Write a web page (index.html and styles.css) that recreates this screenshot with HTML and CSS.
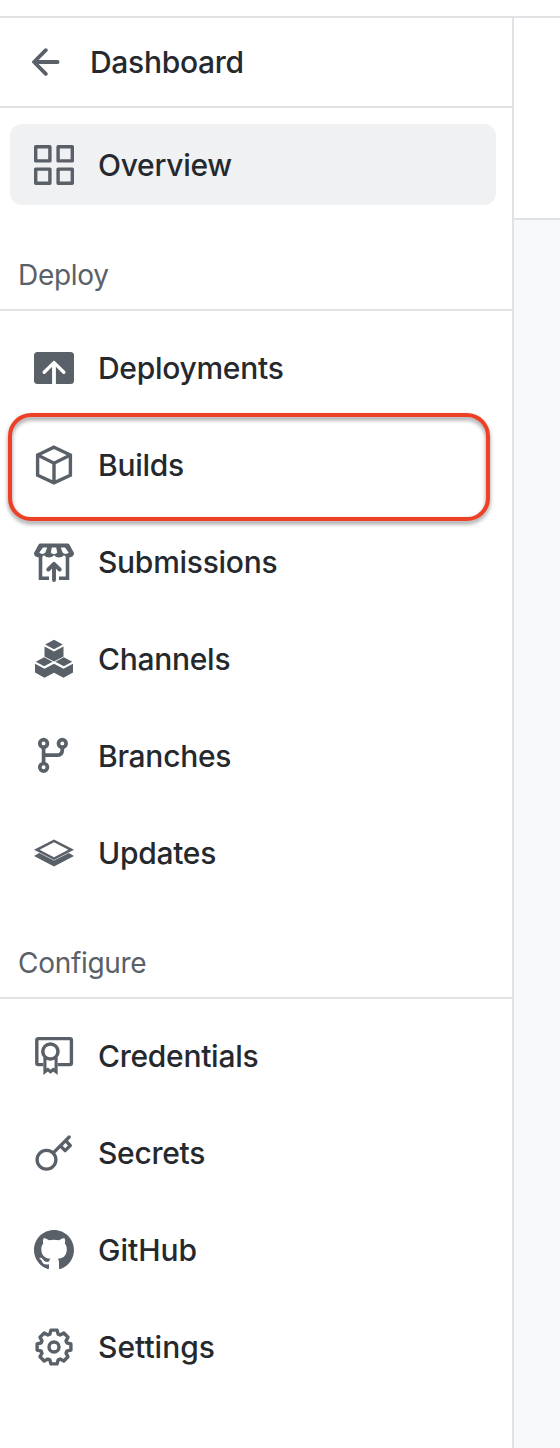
FILE: index.html
```html
<!DOCTYPE html>
<html lang="en">
<head>
<meta charset="utf-8">
<title>Overview</title>
<link rel="stylesheet" href="styles.css">
</head>
<body>
<div class="app">
  <aside class="sidebar">
    <a class="back">
      <svg class="back-icon" viewBox="0 0 28 28"><path class="line round" d="M25.600 14H2.200M13.800 2.200 2 14l11.800 11.800" stroke-width="3.800"/></svg>
      <span>Dashboard</span>
    </a>
    <nav class="group first">
      <a class="item active">
        <svg class="icon" viewBox="0 0 40 40"><g class="line" stroke-width="3.400" stroke-linejoin="round"><path d="M1.700 1.700h14.200v14.200H1.700zM24.100 1.700h14.200v14.200H24.100zM1.700 24.100h14.200v14.200H1.700zM24.100 24.100h14.200v14.200H24.100z"/></g></svg>
        <span>Overview</span>
      </a>
    </nav>
    <h2 class="heading">Deploy</h2>
    <nav class="group deploy">
      <a class="item">
        <svg class="icon" viewBox="0 0 40 40"><rect class="solid" y="4" width="40" height="32" rx="3.500"/><path class="cut round" d="M10.200 24.200 20 14.600l9.800 9.600" stroke-width="3.400"/><path class="cut" d="M20 15v21" stroke-width="3.800"/></svg>
        <span>Deployments</span>
      </a>
      <a class="item marked">
        <svg class="icon" viewBox="0 0 40 40"><path class="line" d="M20 2.200 36.400 10v20.200L20 37.900 3.600 30.200V10zM3.600 10 20 18.200 36.400 10M20 18v19.500" stroke-width="3.400"/></svg>
        <span>Builds</span>
      </a>
      <a class="item">
        <svg class="icon" viewBox="0 0 40 40"><path class="solid" d="M6.500 1.500h27q1.400 0 2 1.300L40 11q.2 4-5 4.500-3 0-5-2.300-2 2.300-5 2.300t-5-2.300q-2 2.300-5 2.300t-5-2.300q-2 2.300-5 2.300Q-.2 15 0 11l4.500-8.200q.6-1.300 2-1.300z"/><path class="gap-fill" d="M9 5.400h4.200L11.300 10.800Q8.500 13 5.200 10.800zM17.800 5.400h4.400l1 5.400Q20 13.600 16.800 10.800zM26.800 5.400H31l3.800 5.400Q31.500 13 28.700 10.800z"/><path class="line" d="M6.500 14v22.300H15M33.500 14v22.300H25" stroke-width="3.600"/><path class="line round" d="M20 38V22M14.300 27.500 20 21.800l5.700 5.700" stroke-width="3.900"/></svg>
        <span>Submissions</span>
      </a>
      <a class="item">
        <svg class="icon" viewBox="0 0 40 40"><path class="solid" d="M20 .8 28.800 5.600 20 10.200 11.200 5.600zM10.500 7.600 20 12.500l9.500-4.900v9.900L20 22.400l-9.500-4.900zM10.200 18.300l8.400 4.500-8.400 4.400-8.400-4.400zM29.800 18.300l8.400 4.400-8.400 4.500-8.400-4.400zM1 24.800l9.500 5 9.500-5 9.500 5 9.500-5v8.700L29.500 38.700 20 33.800l-9.500 4.900L1 33.500z"/></svg>
        <span>Channels</span>
      </a>
      <a class="item">
        <svg class="icon" viewBox="0 0 40 40"><g class="line" stroke-width="3.700"><circle cx="9.600" cy="7.400" r="3.800"/><circle cx="28.300" cy="7.400" r="3.800"/><circle cx="9.600" cy="31.300" r="3.800"/><path d="M9.600 11v17M9.600 19.200h13.200q5.500 0 5.500-5.500V11"/></g></svg>
        <span>Branches</span>
      </a>
      <a class="item">
        <svg class="icon" viewBox="0 0 40 40"><path class="solid" fill-rule="evenodd" d="M20 6.400 40 16.700 20 27 0 16.700zM20 9.200 5.600 16.700 20 24.200l14.400-7.500z"/><path class="solid" d="M5.200 19.900 20 27.500l14.800-7.600L40 22.900 20 33.400 0 22.900z"/></svg>
        <span>Updates</span>
      </a>
    </nav>
    <h2 class="heading configure">Configure</h2>
    <nav class="group">
      <a class="item">
        <svg class="icon" viewBox="0 0 40 40"><rect class="line" x="2.800" y="2.600" width="34.600" height="26" rx="1.500" stroke-width="3.400"/><path class="gap-fill" d="M9.300 22h14.400v12H9.300z"/><circle class="paper" cx="16.400" cy="15.500" r="7.600" stroke-width="3.500"/><path class="line" d="M10.900 21.500v14.300l2.900-2.300 2.700 2.300 2.700-2.300 2.900 2.300V21.500" stroke-width="3.100"/></svg>
        <span>Credentials</span>
      </a>
      <a class="item">
        <svg class="icon" viewBox="0 0 40 40"><g class="line" stroke-width="3.300"><circle cx="12.500" cy="26.700" r="9.400"/><path class="round" d="M19.300 19.800 35.200 4M31.600 7.700l4.700 4.800-5.200 5.200-4.600-4.800"/></g></svg>
        <span>Secrets</span>
      </a>
      <a class="item">
        <svg class="icon" viewBox="0 0 16 16"><path class="solid" d="M8 0C3.580 0 0 3.580 0 8c0 3.540 2.290 6.530 5.470 7.590.4.070.55-.17.55-.38 0-.19-.01-.82-.01-1.490-2.010.37-2.530-.49-2.690-.94-.09-.23-.48-.94-.82-1.130-.28-.15-.68-.52-.01-.53.63-.01 1.080.58 1.230.82.72 1.210 1.870.87 2.330.66.07-.52.28-.87.51-1.070-1.780-.2-3.640-.89-3.640-3.950 0-.87.31-1.590.82-2.150-.08-.2-.36-1.020.08-2.120 0 0 .67-.21 2.200.82.64-.18 1.320-.27 2-.27s1.360.09 2 .27c1.530-1.040 2.200-.82 2.200-.82.44 1.100.16 1.920.08 2.120.51.56.82 1.270.82 2.150 0 3.070-1.870 3.750-3.650 3.950.29.25.54.73.54 1.480 0 1.070-.01 1.930-.01 2.200 0 .21.15.46.55.38A8.010 8.010 0 0 0 16 8c0-4.420-3.580-8-8-8z"/></svg>
        <span class="natural">GitHub</span>
      </a>
      <a class="item">
        <svg class="icon" viewBox="-20 -20 40 40"><g class="line round" stroke-width="3.400"><circle r="5"/><path d="M-3-16.900H3L4.200-12.800 6.080-12.020 9.800-14 14-9.800 12.020-6.080 12.800-4.200 16.900-3V3L12.800 4.200 12.020 6.080 14 9.800 9.800 14 6.080 12.020 4.200 12.800 3 16.900H-3L-4.200 12.800-6.080 12.020-9.800 14-14 9.800-12.020 6.080-12.800 4.200-16.900 3V-3L-12.800-4.200-12.020-6.080-14-9.800-9.800-14-6.080-12.020-4.200-12.800z"/></g></svg>
        <span class="natural">Settings</span>
      </a>
    </nav>
  </aside>
  <main class="content"><div class="content-header"></div></main>
</div>
</body>
</html>
```
FILE: styles.css
```css
* { box-sizing: border-box; }
body {
  margin: 0;
  padding-top: 16px;
  background: #fff;
  color: #25292e;
  font-family: Inter, sans-serif;
}
.app {
  display: flex;
  height: 1432px;
  border-top: 2px solid #e1e2e6;
}
.sidebar {
  width: 514px;
  flex: none;
  border-right: 2px solid #e1e2e6;
}
.content { flex: 1; background: #f8f9fb; }
.content-header {
  height: 202px;
  background: #fff;
  border-bottom: 2px solid #e1e2e6;
}
.back {
  display: flex;
  align-items: center;
  gap: 30px;
  height: 90px;
  padding-left: 32px;
  border-bottom: 2px solid #e1e2e6;
  font-size: 30px;
  font-weight: 500;
  letter-spacing: -.3px;
}
.back-icon { width: 28px; height: 28px; }
.group {
  display: flex;
  flex-direction: column;
  gap: 16px;
  padding: 17px 16px 0 10px;
}
.group.first { padding-top: 16px; }
.item {
  position: relative;
  display: flex;
  align-items: center;
  gap: 24px;
  height: 81px;
  padding: 0 24px 1px;
  border-radius: 12px;
  font-size: 30px;
  font-weight: 500;
  letter-spacing: -.28px;
}
.item.active {
  padding: 1px 24px 0;
  background: #eff1f3;
}
.natural { letter-spacing: 0; }
.marked::after {
  content: "";
  position: absolute;
  inset: -12px 6px -15px -2px;
  border: 4px solid #ee4027;
  border-radius: 23px;
  filter: drop-shadow(0 3px 2px rgba(0, 0, 0, .4));
}
.heading {
  height: 62px;
  margin: 44px 0 0;
  padding: 8px 18px 0;
  border-bottom: 2px solid #e1e2e6;
  color: #596068;
  font-size: 28px;
  font-weight: 400;
  letter-spacing: -.3px;
  line-height: 36px;
}
.heading.configure { margin-top: 43px; }
.icon { width: 40px; height: 40px; flex: none; }
.line { fill: none; stroke: #596068; }
.solid { fill: #596068; }
.cut { fill: none; stroke: #fff; }
.gap-fill { fill: #fff; }
.paper { fill: #fff; stroke: #596068; }
.round { stroke-linecap: round; stroke-linejoin: round; }
```
